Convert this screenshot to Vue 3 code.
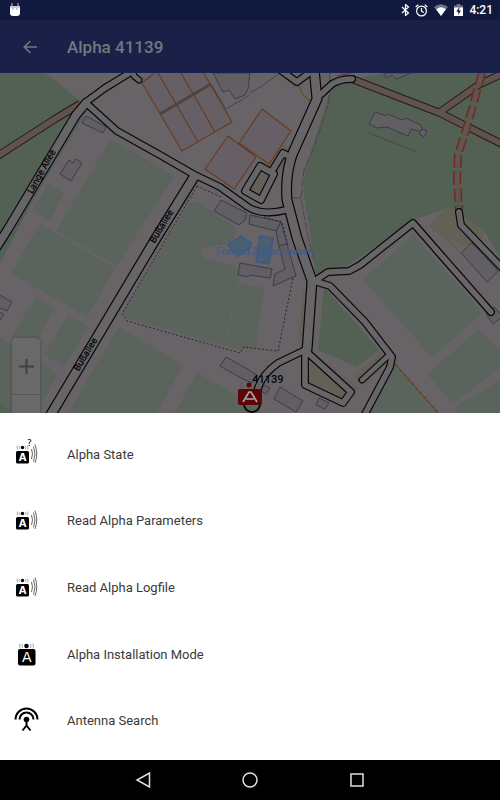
<template>
  <div class="screen">
    <div class="status-bar">
      <svg class="droid" width="12" height="14" viewBox="0 0 12 14" aria-hidden="true">
        <path d="M3 0v3M9 0v3" stroke="#b9bbd0" stroke-width="1" />
        <path d="M1 3h10v7q0 3-3 3h-4q-3 0-3-3z" fill="#fff" />
        <path d="M1 3h10v2h-10z" fill="#c9cad8" />
        <circle cx="4" cy="6" r=".7" fill="#777" />
        <circle cx="8" cy="6" r=".7" fill="#777" />
      </svg>
      <div class="indicators">
        <svg width="9" height="12" viewBox="0 0 9 12" fill="none" stroke="#fff" stroke-width="1.200" aria-hidden="true">
          <path d="M1 3l6.500 6L4.500 11.500V.5L7.500 3 1 9" />
        </svg>
        <svg width="13" height="13" viewBox="0 0 13 13" fill="none" stroke="#fff" stroke-width="1.200" aria-hidden="true">
          <circle cx="6.500" cy="7" r="4.900" />
          <path d="M6.500 4v3.200l2.300 1.400M.7 3L3.300.8M12.300 3L9.700.8" />
        </svg>
        <svg width="14" height="12" viewBox="0 0 14 12" aria-hidden="true">
          <path d="M0 3Q7-2.500 14 3L7 12z" fill="#6c7093" />
          <path d="M2.200 5.200Q7 1.500 11.800 5.200L7 12z" fill="#fff" />
        </svg>
        <svg width="9" height="12" viewBox="0 0 9 12" aria-hidden="true">
          <path d="M2.500 0h4v1.500H9V4H0V1.500h2.500z" fill="#6c7093" />
          <path d="M0 3.500h9V12H0z" fill="#fff" />
          <path d="M5.500 3L2.300 7.800h2V11L7 6.500H5z" fill="#12193f" />
        </svg>
        <span class="clock">4:21</span>
      </div>
    </div>

    <header class="app-bar">
      <button class="back" type="button" aria-label="Back">
        <svg width="14" height="14" viewBox="0 0 14 14" fill="none" stroke="#75777f" stroke-width="1.600">
          <path d="M14 7H1.500M7.300 1L1.300 7l6 6" />
        </svg>
      </button>
      <h1>Alpha 41139</h1>
    </header>

    <main class="map">
      <svg class="map-canvas" viewBox="0 73 500 340" preserveAspectRatio="xMinYMin slice">
        <rect y="73" width="500" height="340" fill="#676367" />
        <g fill="#526153">
          <polygon v-for="p in parks" :key="p" :points="p" />
        </g>
        <g fill="#5b635d">
          <polygon v-for="p in pitches" :key="p" :points="p" />
        </g>
        <g fill="#636056">
          <polygon v-for="p in parking" :key="p" :points="p" />
        </g>

        <g fill="#665f66" stroke="#693c21" stroke-width="1.200">
          <path d="M142 83L158 70H202L232 122 182 151z" />
          <path d="M158 73L198 142M181 73L215 132" />
          <path d="M228 136L256 157 234 189 205 169zM262 109L291 131 269 164 239 143zM337 76L356 72" />
          <path d="M160 114L211 84" stroke="#4c4542" stroke-width="3" />
          <path d="M298 84L303 95 312 102" fill="none" stroke="#69502a" />
        </g>
        <g fill="none" stroke="#48464a" stroke-width="1">
          <path d="M211 84L226 109 250 95M250 93L262 86 280 73" />
          <path d="M330 73L329 102 315 145 304 170 301 198 307 232 314 260" stroke-dasharray="9 2" />
          <path d="M291 198h10M369 133L417 152" />
        </g>

        <g fill="#615f62" stroke="#3d3a55" stroke-width="1">
          <polygon v-for="b in buildings" :key="b" :points="b" />
        </g>
        <g fill="#48606f" stroke="#3d568b" stroke-width="1.400">
          <path d="M241 236L251 243 250 248 237 256 228 245z" />
          <path d="M260 236L273 238 269 264 256 262z" />
        </g>

        <g fill="none" stroke="#29292b" stroke-width="1" stroke-dasharray="2 2">
          <path d="M197 186L122 314 127 321 240 353 244 347 278 351 293 278" />
          <path d="M197 186L221 197M264 217L282 222 288 245" />
        </g>
        <path d="M232 307L228 340M70 240L117 267" stroke="#676367" stroke-width="1.500" fill="none" />
        <path d="M395 364L438 413" stroke="#67431c" stroke-width="1.500" stroke-dasharray="5 1" />

        <g fill="none" stroke-linejoin="round">
          <path v-for="t in tracks" :key="t" :d="t" stroke="#2c1712" stroke-width="8" />
          <path v-for="t in tracks" :key="t" :d="t" stroke="#5f534f" stroke-width="6" />
          <path :d="footway" stroke="#702a20" stroke-width="8" stroke-dasharray="13 4" />
          <path :d="footway" stroke="#63544f" stroke-width="5" stroke-dasharray="13 4" />
        </g>

        <g fill="none" stroke-linejoin="round" stroke-linecap="round">
          <path v-for="r in roads" :key="r.d" :d="r.d" stroke="#090909" :stroke-width="r.w + 3" />
          <path v-for="r in roads" :key="r.d" :d="r.d" stroke="#676567" :stroke-width="r.w + 0.6" />
        </g>

        <g class="street" text-anchor="middle">
          <text transform="translate(44 173) rotate(-61)">Lange Allee</text>
          <text transform="translate(164 228) rotate(-59)">Bußallee</text>
          <text transform="translate(88 356) rotate(-59)">Bußallee</text>
        </g>
        <text class="place" x="265" y="255" text-anchor="middle">Freibad Zuffenhausen</text>

        <circle cx="252" cy="404" r="8" fill="none" stroke="#090909" stroke-width="2" />
        <path d="M242 382q-2 3 0 6M258 382q2 3 0 6" stroke="#76494b" fill="none" />
        <circle cx="249" cy="385" r="2.500" fill="#5c0507" />
        <rect x="238" y="389" width="24" height="16" rx="2" fill="#5c0507" />
        <path d="M243 402L249 392h2l6 10M246 399h8" fill="none" stroke="#aaa" stroke-width="1.600" />
        <text class="marker-label" x="268" y="383" text-anchor="middle">41139</text>
      </svg>
      <div class="zoom">
        <button type="button" aria-label="Zoom in">
          <svg width="15" height="15" viewBox="0 0 15 15" stroke="#414141" stroke-width="2">
            <path d="M0 7.500h15M7.500 0v15" />
          </svg>
        </button>
        <button type="button" aria-label="Zoom out"></button>
      </div>
    </main>

    <ul class="sheet">
      <li v-for="item in items" :key="item.label">
        <button type="button">
          <svg class="icon" width="27" height="27" viewBox="0 0 27 27" aria-hidden="true">
            <template v-if="item.icon === 'antenna'">
              <g fill="none" stroke="#000" stroke-width="2">
                <path d="M2.500 12.500a11 11 0 0 1 22 0M6.500 12.500a7 7 0 0 1 14 0" />
                <path d="M13.500 12v7M9.500 23.500l4-5 4 5" />
              </g>
              <circle cx="13.500" cy="12.500" r="2.800" />
            </template>
            <template v-else-if="item.icon === 'device'">
              <circle cx="13.500" cy="5" r="2.300" />
              <path d="M9.500 3q-1 2 0 4M7.200 2.500q-1.300 2.500 0 5M17.500 3q1 2 0 4M19.800 2.500q1.300 2.500 0 5" fill="none" stroke="#aaa" />
              <rect x="5" y="8" width="17.500" height="16.500" rx="2" />
              <text class="letter large" x="13.700" y="21.300" text-anchor="middle">A</text>
            </template>
            <template v-else>
              <circle cx="9.500" cy="6.500" r="1.700" />
              <path d="M6.500 5q-1 1.500 0 3M4.500 4.500q-1 2 0 4M12.500 5q1 1.500 0 3M14.500 4.500q1 2 0 4" fill="none" stroke="#aaa" />
              <rect x="3" y="10" width="13" height="12.500" rx="1.500" />
              <text class="letter" x="9.500" y="20.300" text-anchor="middle">A</text>
              <path d="M18.500 8q2 5 0 10M20.500 5.500q3 7.500 0 15M22 3.500q3.500 9.500 0 18.500" fill="none" stroke="#555" stroke-width=".9" />
              <text v-if="item.icon === 'query'" class="mark" x="16.500" y="4.500" text-anchor="middle">?</text>
            </template>
          </svg>
          <span>{{ item.label }}</span>
        </button>
      </li>
    </ul>

    <nav class="nav-bar">
      <button type="button" aria-label="Back">
        <svg width="16" height="16" viewBox="0 0 16 16"><path d="M14.500 1v14L2 8z" /></svg>
      </button>
      <button type="button" aria-label="Home">
        <svg width="16" height="16" viewBox="0 0 16 16"><circle cx="8" cy="8" r="7" /></svg>
      </button>
      <button type="button" aria-label="Overview">
        <svg width="16" height="16" viewBox="0 0 16 16"><path d="M2 2h12v12H2z" /></svg>
      </button>
    </nav>
  </div>
</template>

<script setup>
import { ref } from 'vue';

const items = ref([
  { label: 'Alpha State', icon: 'query' },
  { label: 'Read Alpha Parameters', icon: 'read' },
  { label: 'Read Alpha Logfile', icon: 'read' },
  { label: 'Alpha Installation Mode', icon: 'device' },
  { label: 'Antenna Search', icon: 'antenna' }
]);

const parks = [
  '0,73 45,73 82,102 0,240',
  '82,108 86,112 33,200 0,264 0,250',
  '0,401 16,413 0,413',
  '336,84 352,79 385,73 500,73 500,258 485,232 450,207 413,220 373,248 345,267 316,274 312,245 303,190 306,167 329,95',
  '324,287 379,350 357,367 318,350'
];

const pitches = [
  '111,139 174,176 117,266 56,231',
  '40,224 115,268 87,317 11,273',
  '48,184 64,193 50,220 33,211',
  '36,296 54,308 38,340 12,337',
  '68,315 88,327 64,367 44,355',
  '0,338 58,374 36,413 14,413 0,403',
  '119,327 183,365 157,413 68,413',
  '197,373 260,408 260,413 175,413',
  '190,202 197,202 235,227 234,243 200,248 204,258 238,268 238,283 264,288 256,346 240,350 126,318 123,313 165,243',
  '363,280 413,235 483,313 432,357',
  '478,330 500,349 500,368 453,403 427,374',
  '455,408 500,380 500,413 458,413',
  '395,366 436,413 370,413'
];

const parking = [
  '242,190 262,160 283,145 291,152 262,205',
  '440,213 450,207 485,232 479,245 460,245 448,235 462,255 429,226',
  '282,76 297,90 300,80',
  '303,290 307,290 301,342 298,342',
  '313,290 317,290 314,345 311,345',
  '312,352 359,388 343,406 304,388 310,372',
  '354,375 380,352 390,360 362,386'
];

const buildings = [
  '86,116 106,127 103,133 82,123',
  '69,160 73,163 76,159 82,163 71,181 60,174',
  '221,200 247,213 245,220 239,225 214,211',
  '213,73 223,92 229,90 235,99 245,95 248,89 250,73',
  '250,215 281,222 276,231 249,224',
  '281,222 287,244 279,246 276,231',
  '287,244 296,276 273,286 275,274 285,269 279,246',
  '240,263 272,269 270,278 250,275 248,277 238,275',
  '226,357 249,370 257,375 252,383 241,378 220,366',
  '280,387 303,401 296,412 274,399',
  '319,398 329,403 325,409 316,405',
  '264,385 270,388 266,394 261,391',
  '375,112 386,116 388,114 402,120 405,118 421,125 423,132 411,129 408,136 387,127 377,128 369,124',
  '422,129 427,131 424,137 419,134',
  '384,73 387,78 392,75 396,79 411,73',
  '471,243 477,248 498,271 487,282 473,266 461,253',
  '486,314 494,307 503,316 493,324',
  '-4,293 12,302 7,311 -4,306',
  '-4,311 4,314 0,320'
];

const tracks = [
  'M-4 157L55 119 80 104',
  'M440 112L480 84 504 73',
  'M352 79L440 113 504 145'
];

const footway = 'M482 73L474 102 466 130 458 155 457 180 459 210';

const roads = [
  { w: 4, d: 'M132 68L134 76 139 80' },
  { w: 5, d: 'M279 69L297 82 313 70' },
  { w: 7, d: 'M-6 251L8 229 76 115 86 103' },
  { w: 5, d: 'M86 102L105 88 136 69' },
  { w: 5, d: 'M86 103L117 131 160 155 193 174 220 187 248 207Q262 216 286 210' },
  { w: 8, d: 'M194 177L155 240 50 416' },
  { w: 5, d: 'M292 158L283 153 272 171' },
  { w: 5, d: 'M260 166L274 174 261 200 245 191z' },
  { w: 8, d: 'M314 68L317 99 292 155Q285 176 287 200L297 238 312 281 307 350' },
  { w: 5, d: 'M318 97L332 84Q340 79 352 79' },
  { w: 5, d: 'M316 280L328 272 349 271 360 265 413 223 440 254 491 312' },
  { w: 5, d: 'M459 212L461 225 504 270' },
  { w: 5, d: 'M317 282L330 286 365 322 392 357 390 367 364 416' },
  { w: 4, d: 'M387 357L362 380' },
  { w: 5, d: 'M308 353L351 392 343 403 305 385 305 350' },
  { w: 5, d: 'M305 350L278 363Q260 376 257 392' }
];
</script>

<style>
body {
  margin: 0;
}
</style>

<style scoped>
.screen {
  display: grid;
  grid-template-columns: minmax(0, 1fr);
  grid-template-rows: 20px 53px minmax(0, 340fr) minmax(auto, 347fr) 40px;
  height: 100vh;
  background: #fff;
  font-family: Roboto, sans-serif;
}

button {
  border: 0;
  padding: 0;
  background: none;
  font: inherit;
  color: inherit;
}

.status-bar {
  display: flex;
  align-items: center;
  justify-content: space-between;
  padding: 0 7px 0 9px;
  background: #12193f;
  color: #fff;
}

.indicators {
  display: flex;
  align-items: center;
  gap: 6px;
}

.indicators svg:first-child {
  margin-right: -1px;
}

.clock {
  font-size: 12px;
  font-weight: 500;
}

.app-bar {
  display: flex;
  align-items: center;
  gap: 30px;
  padding: 2px 23px 0;
  box-sizing: border-box;
  border-bottom: 1px solid #15235a;
  background: #1a2047;
  color: #75777f;
}

.back {
  display: flex;
}

.app-bar h1 {
  margin: 0;
  font-size: 17px;
  font-weight: 500;
}

.map {
  position: relative;
  overflow: hidden;
  background: #676367;
}

.map-canvas {
  display: block;
  width: 100%;
  height: 100%;
}

.street {
  font: 9px "Noto Sans", sans-serif;
  fill: #050505;
  stroke: #050505;
  stroke-width: 0.3;
}

.place {
  font: 10px Roboto, sans-serif;
  fill: #425c8a;
  stroke: #425c8a;
  stroke-width: 0.2;
}

.marker-label {
  font: 500 11px Roboto, sans-serif;
  fill: #050505;
}

.zoom {
  position: absolute;
  top: 265px;
  left: 12px;
  width: 28px;
  border-radius: 4px;
  background: #696969;
  box-shadow: 0 0 3px #444;
}

.zoom button {
  display: flex;
  align-items: center;
  justify-content: center;
  width: 100%;
  height: 56px;
}

.zoom button + button {
  border-top: 1px solid #575757;
}

.sheet {
  display: grid;
  grid-auto-rows: 1fr;
  margin: 0;
  padding: 8px 0 6px;
  background: #fff;
  list-style: none;
}

.sheet button {
  display: flex;
  align-items: center;
  gap: 27px;
  width: 100%;
  height: 100%;
  padding: 0 13px;
  color: #3a3a3a;
  font-size: 13px;
  text-align: left;
}

.icon {
  overflow: visible;
}

.letter {
  font: 700 10px "DejaVu Sans", sans-serif;
  fill: #fff;
}

.letter.large {
  font-size: 14px;
  font-weight: 400;
}

.mark {
  font: 9px "DejaVu Sans", sans-serif;
}

.nav-bar {
  display: flex;
  align-items: center;
  justify-content: center;
  gap: 91px;
  background: #000;
}

.nav-bar button {
  display: flex;
}

.nav-bar svg {
  fill: none;
  stroke: #e0e0e0;
  stroke-width: 1.5;
}
</style>
